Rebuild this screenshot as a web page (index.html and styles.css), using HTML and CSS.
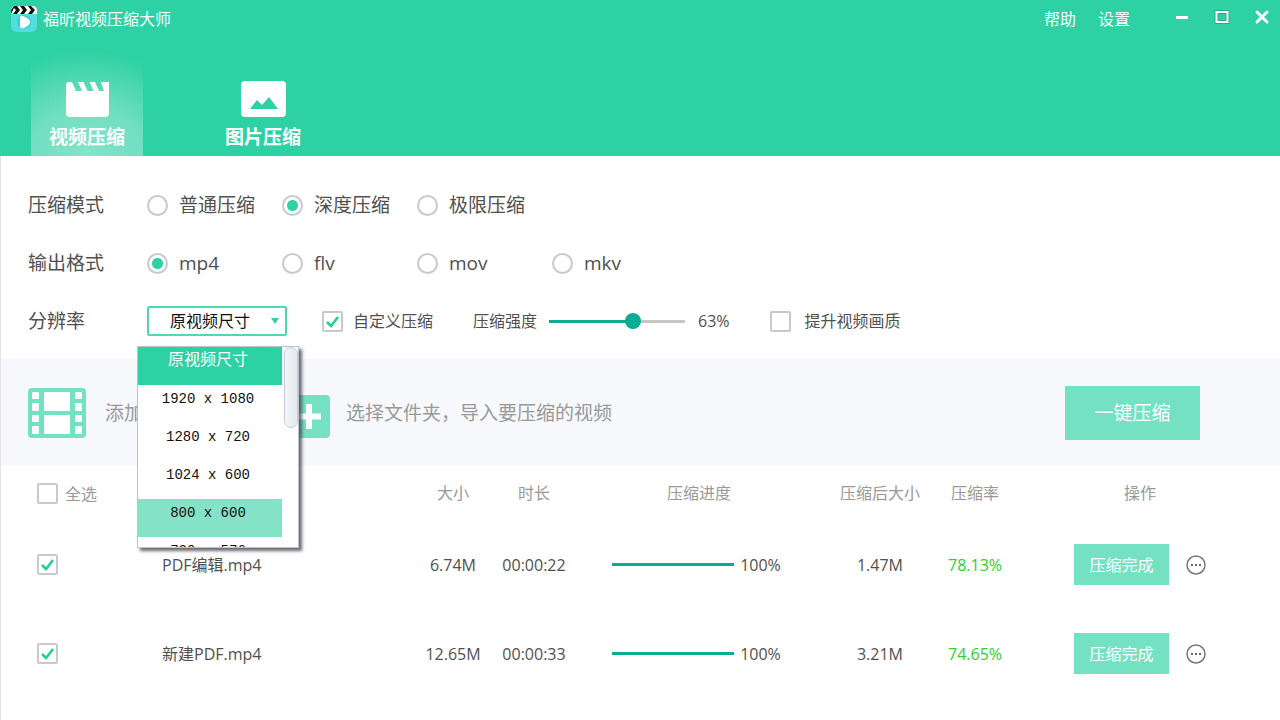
FILE: index.html
```html
<!DOCTYPE html>
<html lang="zh-CN">
<head>
<meta charset="utf-8">
<meta name="viewport" content="width=device-width, initial-scale=1">
<title>福昕视频压缩大师</title>
<link rel="stylesheet" href="styles.css">
</head>
<body>
<div class="app">
  <header class="header">
    <div class="titlebar">
      <svg class="logo" viewBox="0 0 28 28" aria-hidden="true">
        <rect x="1" y="5" width="26" height="22" rx="6" fill="#52dde0"/>
        <path d="M1 9V6q0-5 5-5h16q5 0 5 5v3z" fill="#fff"/>
        <path d="M1 9V5l3-4h3l3 4-3 4H3l3-4-2-2zM10 1h4l3 4-3 4h-4l3-4zM18 1h3l4 4-3 4h-4l3-4z" fill="#111"/>
        <circle cx="14" cy="17" r="7" fill="#3bd0da"/>
        <path d="M10 13q0-3 3-2 7 3 7 6t-6 6q-4 1-4-2z" fill="#fff"/>
      </svg>
      <h1 class="title">福昕视频压缩大师</h1>
      <nav class="menu">
        <button type="button" class="plain">帮助</button>
        <button type="button" class="plain">设置</button>
      </nav>
      <div class="window-controls">
        <button type="button" class="plain" aria-label="最小化"><svg viewBox="0 0 16 16"><path d="M2 8.500H14" stroke="#fff" stroke-width="3"/></svg></button>
        <button type="button" class="plain" aria-label="最大化"><svg viewBox="0 0 16 16"><path d="M2.500 3H13.500V13H2.500z" fill="none" stroke="#28b08b" stroke-width="4"/><path d="M2.500 3H13.500V13H2.500z" fill="none" stroke="#fff" stroke-width="2"/></svg></button>
        <button type="button" class="plain" aria-label="关闭"><svg viewBox="0 0 16 16"><path d="M3 3L13 13M13 3L3 13" stroke="#fff" stroke-width="3" stroke-linecap="round"/></svg></button>
      </div>
    </div>
    <nav class="tabs">
      <button type="button" class="tab tab-active">
        <svg class="tab-icon" viewBox="0 0 45 36" aria-hidden="true"><path d="M4 1H7L11 10H17L13 1H18.500L22.500 10H28.500L24.500 1H30L34 10H39L36 1H44V32Q44 36 40 36H5Q1 36 1 32V4Q1 1 4 1Z" fill="#fff"/></svg>
        <span>视频压缩</span>
      </button>
      <button type="button" class="tab">
        <svg class="tab-icon" viewBox="0 0 45 36" aria-hidden="true"><rect width="45" height="36" rx="4" fill="#fff"/><path d="M9 28L16 19L21 24L28 16L37 28Z" fill="#2dd1a3"/></svg>
        <span>图片压缩</span>
      </button>
    </nav>
  </header>

  <main class="content">
    <form class="settings">
      <div class="setting-row">
        <span class="setting-name" id="mode">压缩模式</span>
        <div class="options" role="radiogroup" aria-labelledby="mode">
          <label class="option"><input type="radio" name="mode">普通压缩</label>
          <label class="option"><input type="radio" name="mode" checked>深度压缩</label>
          <label class="option"><input type="radio" name="mode">极限压缩</label>
        </div>
      </div>
      <div class="setting-row">
        <span class="setting-name" id="format">输出格式</span>
        <div class="options" role="radiogroup" aria-labelledby="format">
          <label class="option"><input type="radio" name="format" checked>mp4</label>
          <label class="option"><input type="radio" name="format">flv</label>
          <label class="option"><input type="radio" name="format">mov</label>
          <label class="option"><input type="radio" name="format">mkv</label>
        </div>
      </div>
      <div class="setting-row">
        <label class="setting-name" for="resolution">分辨率</label>
        <div class="combo">
          <select id="resolution"><option>原视频尺寸</option></select>
          <div class="dropdown">
            <ul class="choices" role="listbox" aria-label="分辨率">
              <li role="option" class="choice choice-selected" aria-selected="true">原视频尺寸</li>
              <li role="option" class="choice">1920 x 1080</li>
              <li role="option" class="choice">1280 x 720</li>
              <li role="option" class="choice">1024 x 600</li>
              <li role="option" class="choice choice-hover">800 x 600</li>
              <li role="option" class="choice">720 x 576</li>
            </ul>
            <div class="thumb"></div>
          </div>
        </div>
        <label class="check custom"><input type="checkbox" checked>自定义压缩</label>
        <div class="strength">
          <label for="strength">压缩强度</label>
          <input type="range" id="strength" min="0" max="100" value="63">
          <output for="strength">63%</output>
        </div>
        <label class="check enhance"><input type="checkbox">提升视频画质</label>
      </div>
    </form>

    <section class="actions">
      <button type="button" class="plain add add-video">
        <svg class="film" viewBox="0 0 58 50" aria-hidden="true"><rect width="58" height="50" rx="4" fill="#73e1c2"/><g fill="#fff"><rect x="16" y="4" width="26" height="19" rx="1"/><rect x="16" y="27" width="26" height="19" rx="1"/><rect x="4" y="4" width="7" height="7" rx="1"/><rect x="4" y="15" width="7" height="8" rx="1"/><rect x="4" y="27" width="7" height="7" rx="1"/><rect x="4" y="38" width="7" height="8" rx="1"/><rect x="47" y="4" width="7" height="7" rx="1"/><rect x="47" y="15" width="7" height="8" rx="1"/><rect x="47" y="27" width="7" height="7" rx="1"/><rect x="47" y="38" width="7" height="8" rx="1"/></g></svg>
        <span>添加视频</span>
      </button>
      <button type="button" class="plain add">
        <svg class="plus" viewBox="0 0 43 43" aria-hidden="true"><rect width="43" height="43" rx="4" fill="#73e1c2"/><path d="M22 9V34M10 21.500H34" stroke="#fff" stroke-width="6"/></svg>
        <span>选择文件夹，导入要压缩的视频</span>
      </button>
      <button type="button" class="fill start">一键压缩</button>
    </section>

    <table class="files">
      <colgroup><col class="c-pick"><col class="c-name"><col class="c-size"><col class="c-time"><col class="c-progress"><col class="c-after"><col class="c-ratio"><col class="c-op"></colgroup>
      <thead>
        <tr>
          <th class="pick"><label class="check"><input type="checkbox">全选</label></th>
          <th></th><th>大小</th><th>时长</th><th>压缩进度</th><th>压缩后大小</th><th>压缩率</th><th class="op">操作</th>
        </tr>
      </thead>
      <tbody>
        <tr>
          <td class="pick"><input type="checkbox" checked aria-label="PDF编辑.mp4"></td>
          <td class="name">PDF编辑.mp4</td><td>6.74M</td><td>00:00:22</td>
          <td><div class="progress"><div class="bar"></div>100%</div></td>
          <td>1.47M</td><td class="ratio">78.13%</td>
          <td class="op"><div class="ops"><button type="button" class="fill done">压缩完成</button><button type="button" class="plain more" aria-label="更多"><svg viewBox="0 0 20 20"><circle cx="10" cy="10" r="9" fill="none" stroke="#777" stroke-width="1.500"/><path d="M5 9h2v2H5zM9 9h2v2H9zM13 9h2v2h-2z" fill="#666"/></svg></button></div></td>
        </tr>
        <tr>
          <td class="pick"><input type="checkbox" checked aria-label="新建PDF.mp4"></td>
          <td class="name">新建PDF.mp4</td><td>12.65M</td><td>00:00:33</td>
          <td><div class="progress"><div class="bar"></div>100%</div></td>
          <td>3.21M</td><td class="ratio">74.65%</td>
          <td class="op"><div class="ops"><button type="button" class="fill done">压缩完成</button><button type="button" class="plain more" aria-label="更多"><svg viewBox="0 0 20 20"><circle cx="10" cy="10" r="9" fill="none" stroke="#777" stroke-width="1.500"/><path d="M5 9h2v2H5zM9 9h2v2H9zM13 9h2v2h-2z" fill="#666"/></svg></button></div></td>
        </tr>
      </tbody>
    </table>
  </main>
</div>
</body>
</html>
```
FILE: styles.css
```css
* { box-sizing: border-box; }

body {
  margin: 0;
  background: #fff;
  color: #505050;
  font: 16px/24px "Open Sans", "Noto Sans CJK SC", sans-serif;
}

button, input, select { margin: 0; font: inherit; color: inherit; }
svg { display: block; flex: none; }

.plain { padding: 0; border: 0; background: none; }
.app { min-height: 100vh; display: flex; flex-direction: column; }

/* header */
.header { background: #2dd1a3; color: #fff; }
.titlebar { display: flex; align-items: center; height: 38px; padding: 0 10px; }
.logo { width: 28px; height: 28px; }
.title { margin: 0 auto 0 5px; font-size: 16px; font-weight: 400; }
.menu { display: flex; gap: 22px; }
.window-controls { display: flex; gap: 24px; margin-left: 44px; padding-bottom: 4px; }
.window-controls svg { width: 16px; height: 16px; }

.tabs { display: flex; gap: 64px; padding: 12px 31px 0; }
.tab {
  display: flex;
  flex-direction: column;
  align-items: center;
  width: 112px;
  height: 106px;
  padding: 31px 0 0;
  border: 0;
  background: none;
  font-size: 19px;
  font-weight: 700;
  line-height: 24px;
}
.tab-active {
  background: radial-gradient(ellipse 110% 100% at 50% 100%, #84e4c9 0%, #72dfc0 45%, #2dd1a3 100%);
}
.tab-icon { width: 45px; height: 36px; margin-bottom: 8px; }

.content { flex: 1; border-left: 1px solid #e4e4e4; }

/* tick boxes and radios */
input[type="radio"], input[type="checkbox"] {
  flex: none;
  appearance: none;
  width: 21px;
  height: 21px;
  border: 2px solid #c9c9c9;
  background: #fff;
}
input[type="radio"] { border-radius: 50%; }
input[type="radio"]:checked {
  background: radial-gradient(circle, #2dd1a3 5px, #fff 6px);
}
input[type="checkbox"] { display: block; border-radius: 2px; }
input[type="checkbox"]:checked {
  background: url("data:image/svg+xml,%3Csvg xmlns='http://www.w3.org/2000/svg' viewBox='0 0 17 17'%3E%3Cpath d='M3 9L7 13L14 4' fill='none' stroke='%231fd09c' stroke-width='2.500'/%3E%3C/svg%3E") center / 17px 17px no-repeat #fff;
}

/* settings */
.settings { display: flex; flex-direction: column; gap: 28px; padding: 34px 27px 23px; }
.setting-row { display: flex; align-items: center; height: 30px; }
.setting-name { flex: none; width: 119px; font-size: 19px; }
.options { display: flex; font-size: 19px; }
.option { display: flex; align-items: center; gap: 11px; width: 135px; white-space: nowrap; }

.combo { position: relative; flex: none; width: 140px; }
.combo select {
  display: block;
  width: 100%;
  height: 30px;
  padding: 0 22px 0 8px;
  border: 2px solid #4fd9b0;
  border-radius: 2px;
  appearance: none;
  color: #111;
  text-align-last: center;
  background: url("data:image/svg+xml,%3Csvg xmlns='http://www.w3.org/2000/svg' viewBox='0 0 8 6'%3E%3Cpath d='M0 0H8L4 6Z' fill='%232dd1a3'/%3E%3C/svg%3E") right 6px center / 8px 6px no-repeat #fff;
}
.dropdown {
  position: absolute;
  z-index: 2;
  top: 40px;
  left: -10px;
  display: flex;
  justify-content: space-between;
  width: 162px;
  height: 202px;
  overflow: hidden;
  border: 1px solid #bfc1cf;
  background: #fff;
  box-shadow: 3px 3px 3px rgba(60, 60, 70, .75);
}
.choices { flex: none; width: 144px; margin: 0; padding: 0; list-style: none; }
.choice {
  height: 38px;
  padding: 2px 4px 0 0;
  color: #111;
  font-family: "Liberation Mono", "Noto Sans CJK SC", monospace;
  font-size: 14px;
  text-align: center;
}
.choice-selected { background: #2dd1a3; color: #fff; font-size: 16px; }
.choice-hover { background: #84e2c7; }
.thumb {
  width: 14px;
  height: 81px;
  border: 1px solid #c3ced8;
  border-radius: 7px;
  background: linear-gradient(90deg, #f4f7f9, #e2e8ed);
}

.check { display: inline-flex; align-items: center; gap: 10px; white-space: nowrap; }
.custom { margin-left: 35px; }
.strength { display: flex; align-items: center; margin-left: 40px; white-space: nowrap; }
.strength input {
  width: 136px;
  height: 16px;
  margin: 0 13px 0 12px;
  appearance: none;
  background: linear-gradient(90deg, #0aac94 62%, #c6c6c6 62%) center / 100% 3px no-repeat;
}
.strength input::-webkit-slider-thumb {
  appearance: none;
  width: 16px;
  height: 16px;
  border-radius: 50%;
  background: #0aac94;
}
.enhance { gap: 14px; margin-left: 40px; }

/* add files bar */
.actions {
  display: flex;
  align-items: center;
  height: 107px;
  padding: 0 80px 0 27px;
  background: #f7f8fb;
}
.add { display: flex; align-items: center; color: #999; font-size: 19px; white-space: nowrap; }
.add-video { gap: 19px; width: 259px; }
.add + .add { gap: 16px; }
.film { width: 58px; height: 50px; }
.plus { width: 43px; height: 43px; margin-top: 7px; }
.fill { border: 0; background: #73e1c2; color: #fff; }
.start { width: 135px; height: 54px; margin-left: auto; font-size: 19px; }

/* file list */
.files { width: 100%; border-collapse: collapse; table-layout: fixed; }
.files th, .files td { padding: 0; text-align: center; font-weight: 400; white-space: nowrap; }
.files th { height: 54px; color: #999; }
.files td { height: 89px; }
.files .pick { padding-left: 36px; text-align: left; }
.files th .check { gap: 7px; vertical-align: middle; }
.files .name { padding-left: 13px; text-align: left; }
.files .ratio { color: #2fce2f; }
.files .op { padding-right: 14px; }
.c-pick { width: 148px; }
.c-size { width: 82px; }
.c-time { width: 80px; }
.c-progress { width: 250px; }
.c-after { width: 112px; }
.c-ratio { width: 78px; }
.c-op { width: 266px; }
.progress { display: flex; align-items: center; justify-content: center; gap: 6px; padding-right: 5px; }
.bar { width: 122px; height: 3px; background: #0aac94; }
.ops { display: flex; align-items: center; justify-content: center; gap: 17px; }
.done { width: 95px; height: 41px; }
.more svg { width: 20px; height: 20px; }
```
